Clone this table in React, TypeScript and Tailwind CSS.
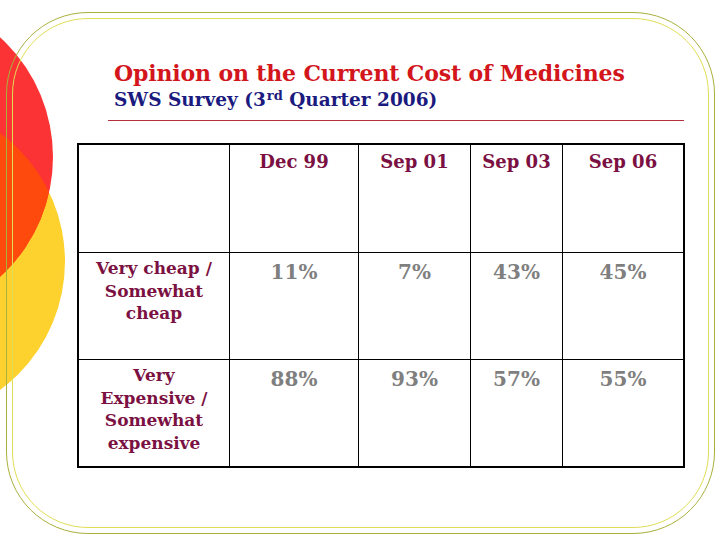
import React from "react";

const serif = "font-['DejaVu_Serif','Liberation_Serif',serif]";

const headers = ["Dec 99", "Sep 01", "Sep 03", "Sep 06"];
const rows = [
  { label: ["Very cheap /", "Somewhat", "cheap"], values: ["11%", "7%", "43%", "45%"] },
  { label: ["Very", "Expensive /", "Somewhat", "expensive"], values: ["88%", "93%", "57%", "55%"] },
];

export default function App() {
  return (
    <div className={`relative w-[720px] h-[540px] overflow-hidden bg-white ${serif}`}>
      <svg className="absolute left-0 top-0" width="90" height="420" viewBox="0 0 90 420">
        <defs>
          <clipPath id="yc">
            <circle cx="-94.5" cy="261.5" r="159.5" />
          </clipPath>
        </defs>
        <circle cx="-94.5" cy="261.5" r="159.5" fill="#fdd22f" />
        <circle cx="-109" cy="157" r="162" fill="#fb3334" />
        <circle cx="-109" cy="157" r="162" fill="#ff4a0e" clipPath="url(#yc)" />
      </svg>

      <div className="relative pt-[12px] pl-[6px]">
        <div className="w-[709px] h-[522px] rounded-[82px] border border-[#a9b03c] p-[5px]">
          <div className="h-full rounded-[76px] border border-[#e0de56] pl-[101px] pt-[41px]">
            <div className="text-[22px] leading-[26px] tracking-[-0.15px] font-bold text-[#d3151c] oldstyle-nums">
              Opinion on the Current Cost of Medicines
            </div>
            <div className="mt-[3px] text-[18.5px] leading-[22px] font-bold text-[#1b1a7e] oldstyle-nums">
              SWS Survey (3<sup className="text-[13px] relative -top-[6px] ml-[1px]">rd</sup> Quarter 2006)
            </div>
            <div className="ml-[-6px] mt-[9px] w-[576px] h-px bg-[#b5303d]" />

            <div className="ml-[-37px] mt-[22px] w-[608px] border-2 border-black grid grid-cols-[151px_129px_112px_92px_120px] grid-rows-[108px_107px_106px]">
              <div className="border-r border-b border-black" />
              {headers.map((h, i) => (
                <div
                  key={h}
                  className={`border-b border-black ${i < 3 ? "border-r" : ""} pt-[6px] text-center text-[18px] leading-[22px] font-bold text-[#7b1142] oldstyle-nums`}
                >
                  {h}
                </div>
              ))}
              {rows.map((r, ri) => (
                <React.Fragment key={ri}>
                  <div
                    className={`border-r border-black ${ri === 0 ? "border-b" : ""} px-[8px] pt-[4px] text-center text-[17px] leading-[22.5px] font-bold text-[#7b1142]`}
                  >
                    {r.label.map((l, li) => (
                      <div key={li}>{l}</div>
                    ))}
                  </div>
                  {r.values.map((v, vi) => (
                    <div
                      key={vi}
                      className={`border-black ${vi < 3 ? "border-r" : ""} ${ri === 0 ? "border-b" : ""} pt-[7px] text-center text-[20px] leading-[24px] font-bold text-[#7f7f7f] oldstyle-nums`}
                    >
                      {v}
                    </div>
                  ))}
                </React.Fragment>
              ))}
            </div>
          </div>
        </div>
      </div>
    </div>
  );
}
